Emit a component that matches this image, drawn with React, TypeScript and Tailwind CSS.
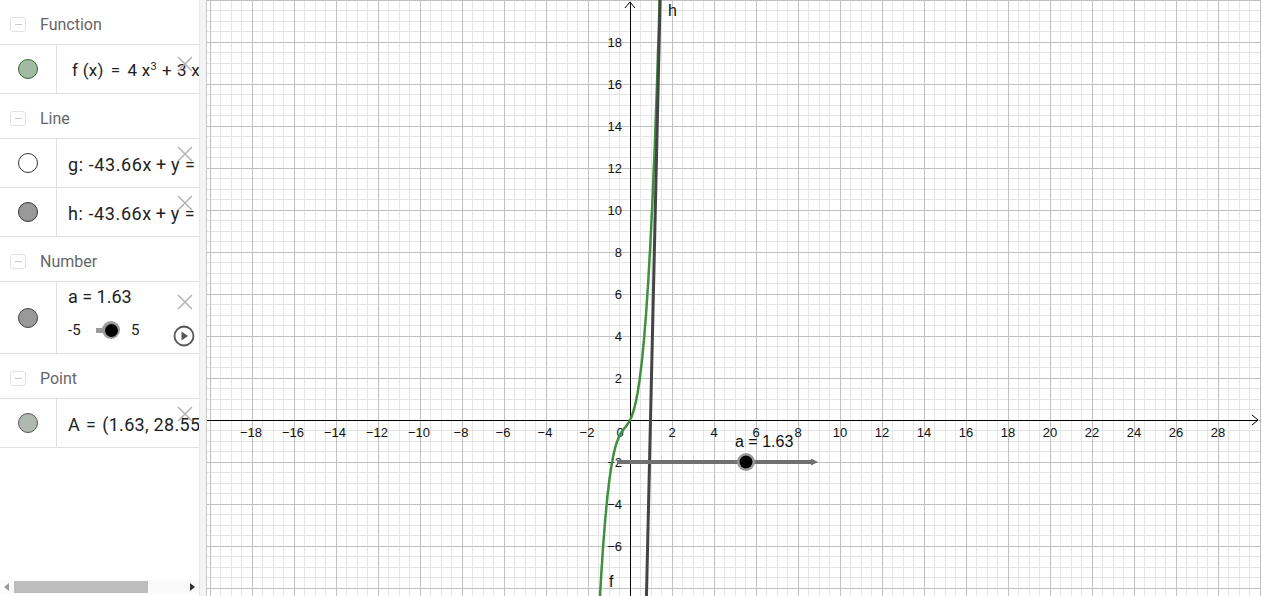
import React from "react";

const ORIGIN_X = 423; // svg coords (page x 631)
const ORIGIN_Y = 420;
const UNIT = 21;
const GRAPH_W = 1054;
const GRAPH_H = 596;

function toPx(x: number, y: number) {
  return [ORIGIN_X + x * UNIT, ORIGIN_Y - y * UNIT];
}

function fPath() {
  const pts: string[] = [];
  for (let x = -1.46; x <= 1.46; x += 0.01) {
    const y = 4 * x * x * x + 3 * x * x + 2 * x;
    const [px, py] = toPx(x, y);
    pts.push(`${pts.length === 0 ? "M" : "L"}${px.toFixed(1)},${py.toFixed(1)}`);
  }
  return pts.join(" ");
}

function Graph() {
  const minor: React.ReactNode[] = [];
  const major: React.ReactNode[] = [];
  for (let k = -41; k <= 61; k++) {
    const x = ORIGIN_X + k * 10.5;
    if (x < 0 || x > GRAPH_W) continue;
    const line = <line key={"v" + k} x1={x} y1={0} x2={x} y2={GRAPH_H} />;
    if (k % 4 === 0) major.push(line);
    else minor.push(line);
  }
  for (let k = -17; k <= 41; k++) {
    const y = ORIGIN_Y - k * 10.5;
    if (y < 0 || y > GRAPH_H) continue;
    const line = <line key={"h" + k} x1={0} y1={y} x2={GRAPH_W} y2={y} />;
    if (k % 4 === 0) major.push(line);
    else minor.push(line);
  }

  const xLabels: React.ReactNode[] = [];
  for (let v = -18; v <= 28; v += 2) {
    if (v === 0) continue;
    const x = ORIGIN_X + v * UNIT;
    xLabels.push(
      <text key={"x" + v} x={v < 0 ? x - 1 : x} y={437} textAnchor="middle">
        {v < 0 ? "\u2212" + Math.abs(v) : v}
      </text>
    );
  }
  const yLabels: React.ReactNode[] = [];
  for (let v = -6; v <= 18; v += 2) {
    if (v === 0) continue;
    const y = ORIGIN_Y - v * UNIT;
    yLabels.push(
      <text key={"y" + v} x={415} y={y + 4.5} textAnchor="end">
        {v < 0 ? "\u2212" + Math.abs(v) : v}
      </text>
    );
  }

  const hx = (y: number) => (y + 42.61) / 43.66;
  const [h1x, h1y] = toPx(hx(21), 21);
  const [h2x, h2y] = toPx(hx(-9), -9);

  return (
    <svg width={GRAPH_W} height={GRAPH_H} className="block">
      <rect width={GRAPH_W} height={GRAPH_H} fill="#ffffff" />
      <g stroke="#e4e4e4" strokeWidth={1} shapeRendering="crispEdges">
        {minor}
      </g>
      <g stroke="#c0c0c0" strokeWidth={1} shapeRendering="crispEdges">
        {major}
      </g>
      <g stroke="#000" strokeWidth={1} shapeRendering="crispEdges">
        <line x1={0} y1={ORIGIN_Y} x2={GRAPH_W - 3} y2={ORIGIN_Y} />
        <line x1={ORIGIN_X} y1={2} x2={ORIGIN_X} y2={GRAPH_H} />
      </g>
      <g stroke="#000" strokeWidth={1} fill="none">
        <path d={`M${GRAPH_W - 9},${ORIGIN_Y - 5} L${GRAPH_W - 3},${ORIGIN_Y} L${GRAPH_W - 9},${ORIGIN_Y + 5}`} />
        <path d={`M${ORIGIN_X - 5},${8} L${ORIGIN_X},${2} L${ORIGIN_X + 5},${8}`} />
      </g>
      <g fontFamily="'Liberation Sans', Arial, sans-serif" fontSize={13} fill="#111">
        {xLabels}
        {yLabels}
        <text x={413} y={437} textAnchor="middle">0</text>
      </g>
      <path d={fPath()} fill="none" stroke="#3f8f3f" strokeWidth={2.5} />
      <line x1={h1x} y1={h1y} x2={h2x} y2={h2y} stroke="#444" strokeWidth={3} />
      <g fontFamily="'Liberation Sans', Arial, sans-serif" fontSize={16} fill="#111">
        <text x={461} y={16}>h</text>
        <text x={402} y={587}>f</text>
        <text x={528} y={447}>a = 1.63</text>
      </g>
      <line x1={410} y1={462} x2={606} y2={462} stroke="#707070" strokeWidth={4} />
      <path d="M604,458.5 L611,462 L604,465.5 Z" fill="#707070" />
      <circle cx={539} cy={462} r={9} fill="#9a9a9a" />
      <circle cx={539} cy={462} r={6.5} fill="#000" />
    </svg>
  );
}

function Toggle() {
  return (
    <div className="w-[16px] h-[15px] rounded-[3px] border border-[#e2e2e2] bg-white flex items-center justify-center">
      <div className="w-[7px] h-[1px] bg-[#c8c8c8]" />
    </div>
  );
}

function Header({ title }: { title: string }) {
  return (
    <div className="h-[45px] shrink-0 border-b border-[#e0e0e0] flex items-center pt-[5px] pl-[10px]">
      <Toggle />
      <span className="ml-[14px] text-[16px] text-[#666]">{title}</span>
    </div>
  );
}

function Dot({ fill, stroke }: { fill: string; stroke: string }) {
  return (
    <div
      className="w-[20px] h-[20px] rounded-full border"
      style={{ backgroundColor: fill, borderColor: stroke }}
    />
  );
}

function XIcon({ className }: { className: string }) {
  return (
    <svg width="18" height="18" viewBox="0 0 18 18" className={className}>
      <path d="M2,2 L16,16 M16,2 L2,16" stroke="#b5b5b5" strokeWidth="1.6" fill="none" />
    </svg>
  );
}

function Row({
  fill,
  stroke,
  children,
  xTop = 10,
}: {
  fill: string;
  stroke: string;
  children: React.ReactNode;
  xTop?: number;
}) {
  return (
    <div className="h-[49px] shrink-0 flex border-b border-[#e0e0e0]">
      <div className="w-[57px] shrink-0 border-r border-[#e0e0e0] flex items-center justify-center pr-[1px]">
        <Dot fill={fill} stroke={stroke} />
      </div>
      <div className="relative flex-1 overflow-hidden flex items-center pl-[11px] pt-[3px] text-[18px] text-[#222] whitespace-nowrap">
        {children}
        <XIcon className={`absolute right-[5px] ${xTop === 10 ? "top-[10px]" : "top-[6px]"}`} />
      </div>
    </div>
  );
}

export default function App() {
  return (
    <div className="w-[1262px] h-[596px] flex overflow-hidden bg-white" style={{ fontFamily: "Roboto, 'Noto Sans', sans-serif" }}>
      <div className="w-[200px] shrink-0 h-full flex flex-col border-r border-[#e8e8e8]">
        <Header title="Function" />
        <Row fill="#a3b9a3" stroke="#2f6a2f" xTop={10}>
          <span className="pl-[4px] text-[17px] tracking-[0.3px]">
            f (x)<span className="mx-[7px]">=</span>4 x<sup className="text-[11px]">3</sup>
            <span className="mx-[5px]">+</span>3 x<sup className="text-[11px]">2</sup>
            <span className="mx-[5px]">+</span>2 x
          </span>
        </Row>
        <Header title="Line" />
        <Row fill="#ffffff" stroke="#333333" xTop={6}>
          <span className="tracking-[0.6px]">
            g: -43.66x<span className="mx-[4px]">+</span>y<span className="mx-[5px]">=</span>-42.61
          </span>
        </Row>
        <Row fill="#999999" stroke="#333333" xTop={6}>
          <span className="tracking-[0.6px]">
            h: -43.66x<span className="mx-[4px]">+</span>y<span className="mx-[5px]">=</span>-42.61
          </span>
        </Row>
        <Header title="Number" />
        <div className="h-[72px] shrink-0 flex border-b border-[#e0e0e0]">
          <div className="w-[57px] shrink-0 border-r border-[#e0e0e0] flex items-center justify-center pr-[1px]">
            <Dot fill="#999999" stroke="#444444" />
          </div>
          <div className="relative flex-1 flex flex-col pl-[11px] pt-[4px] text-[#222]">
            <span className="text-[18px] leading-[22px]">a = 1.63</span>
            <div className="flex items-center mt-[11px] text-[15px]">
              <span className="w-[28px]">-5</span>
              <div className="w-[8px] h-[5px] bg-[#9a9a9a]" />
              <div className="w-[18px] h-[18px] rounded-full bg-[#9c9c9c] flex items-center justify-center -ml-[2px]">
                <div className="w-[13px] h-[13px] rounded-full bg-black" />
              </div>
              <span className="ml-[11px]">5</span>
            </div>
            <XIcon className="absolute right-[5px] top-[11px]" />
            <svg width="22" height="22" viewBox="0 0 22 22" className="absolute right-[4px] top-[43px]">
              <circle cx="11" cy="11" r="9.5" fill="none" stroke="#555" strokeWidth="1.8" />
              <path d="M8.5,6.5 L15,11 L8.5,15.5 Z" fill="#555" />
            </svg>
          </div>
        </div>
        <Header title="Point" />
        <Row fill="#b0b9b0" stroke="#555555" xTop={6}>
          <span className="tracking-[0.3px]">
            A<span className="mx-[6px]">=</span>(1.63, 28.55)
          </span>
        </Row>
        <div className="flex-1" />
        <div className="h-[14px] mb-[2px] shrink-0 flex items-center bg-[#fafafa]">
          <svg width="14" height="14" viewBox="0 0 14 14">
            <path d="M9,3 L4,7 L9,11 Z" fill="#999" />
          </svg>
          <div className="w-[134px] h-[12px] bg-[#bdbdbd]" />
          <div className="flex-1" />
          <svg width="14" height="14" viewBox="0 0 14 14">
            <path d="M5,3 L10,7 L5,11 Z" fill="#333" />
          </svg>
        </div>
      </div>
      <div className="w-[7px] shrink-0 h-full bg-[#f4f4f4] border-r border-[#c8c8c8]" />
      <div className="flex-1 h-full overflow-hidden">
        <Graph />
      </div>
    </div>
  );
}
